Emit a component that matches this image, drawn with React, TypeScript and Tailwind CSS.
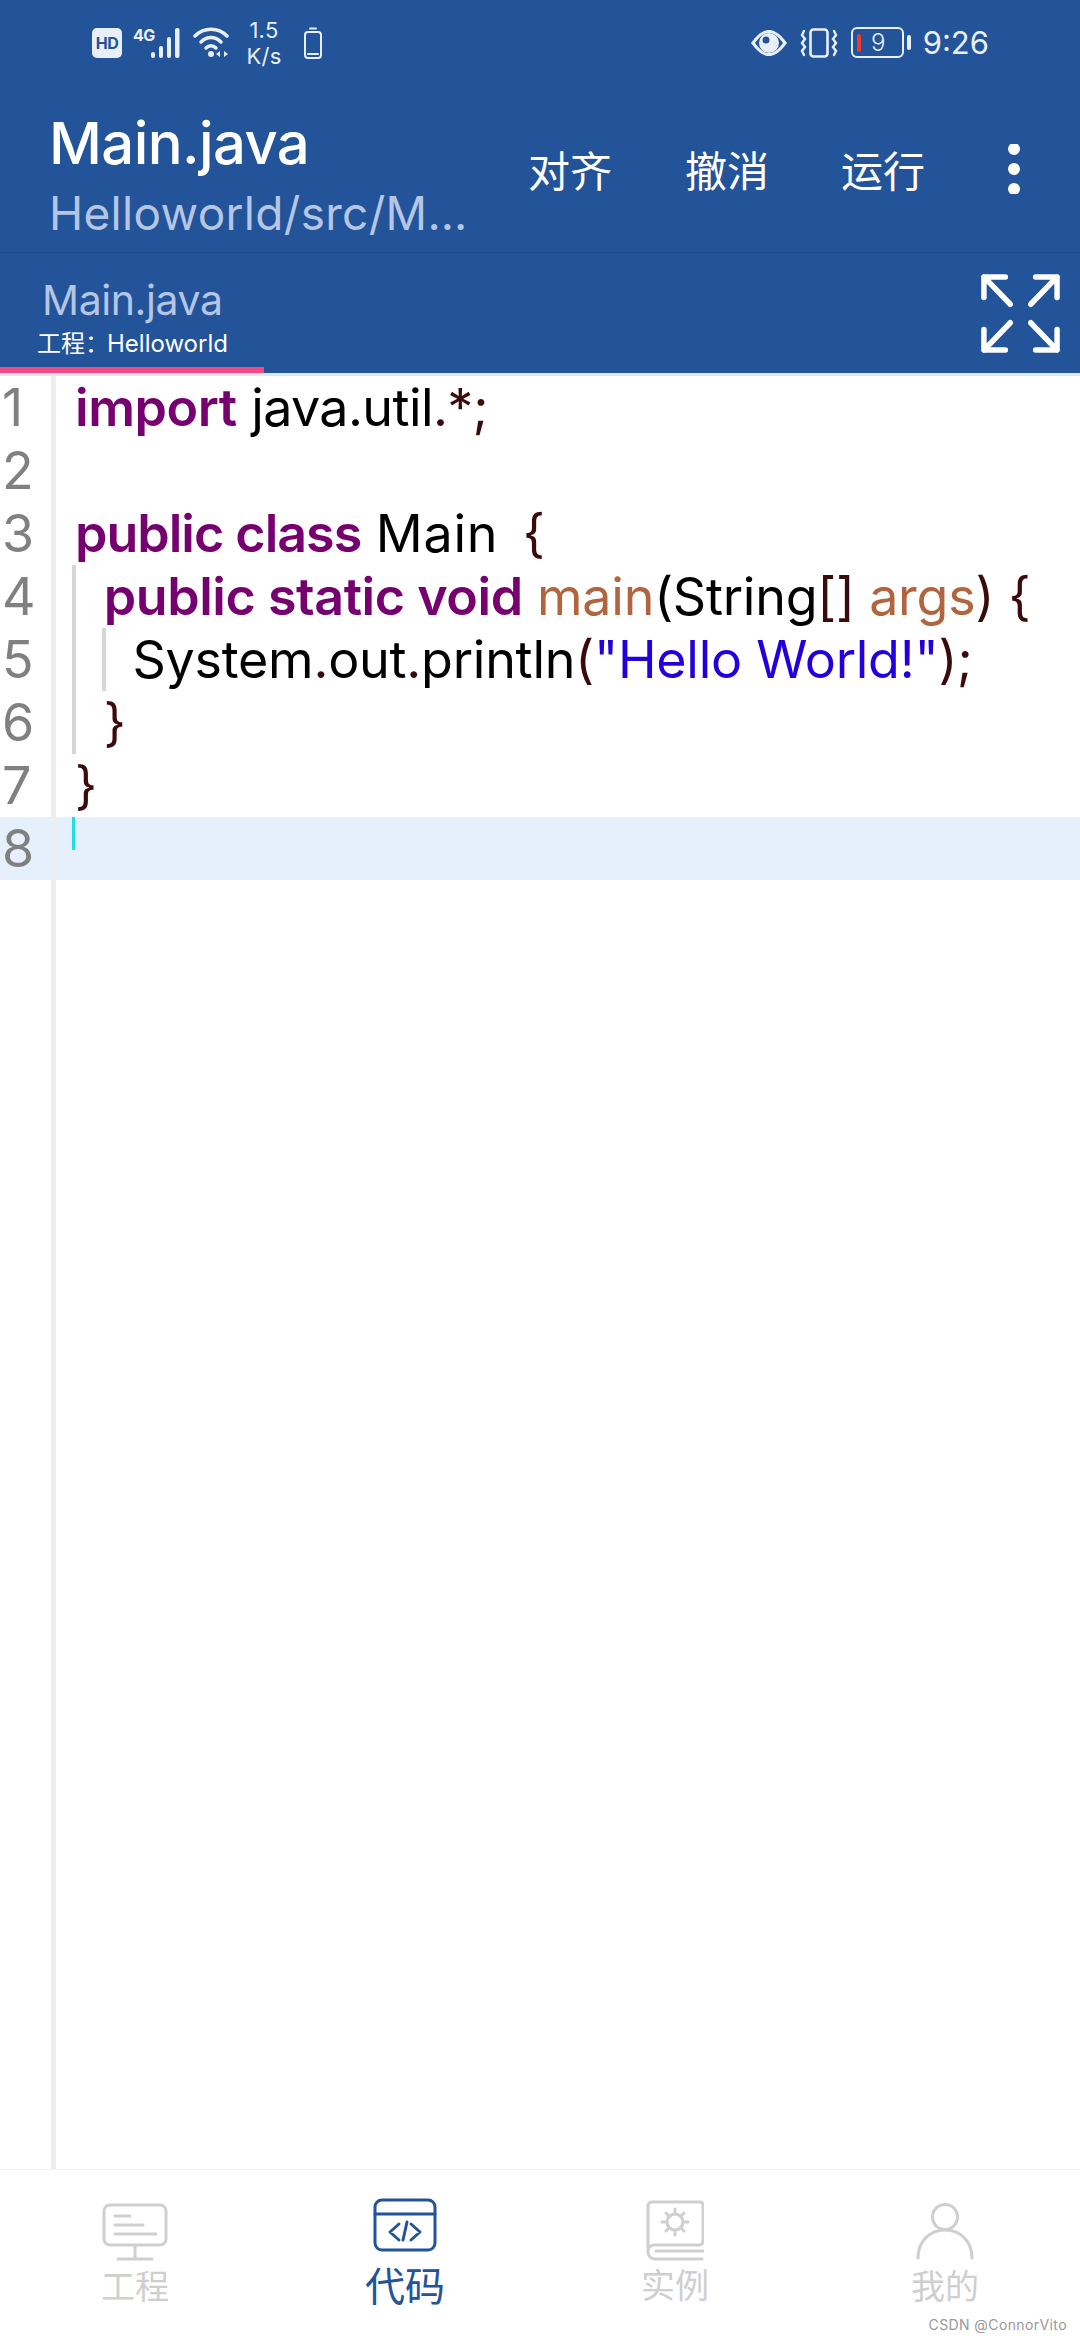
import React from "react";

const BLUE = "bg-[#235399]";
const kw = "text-[#770070] font-semibold tracking-[-0.45px]";
const pn = "text-[#3c0a0a]";
const fn = "text-[#b0653f]";

const Code = ({ n, active, children }: { n: number; active?: boolean; children?: React.ReactNode }) => (
  <div className={`flex h-[63px] items-center ${active ? "bg-[#e6f0fc]" : ""}`}>
    <div className="w-[51px] shrink-0 pl-[2px] text-[52px] leading-[63px] text-[#808080]">{n}</div>
    <div className="h-full w-[5px] shrink-0 bg-[#eeeeee]" />
    <div className="pl-[19px] text-[52px] leading-[63px] whitespace-pre text-black tracking-[-0.25px]">{children}</div>
  </div>
);

export default function App() {
  return (
    <div className="relative flex h-[2340px] w-[1080px] flex-col overflow-hidden bg-white font-['Inter','Noto_Sans_CJK_SC',sans-serif]">
      {/* header */}
      <header className={`${BLUE} h-[253px] shrink-0 border-b border-[#1f4b8c] text-white`}>
        <div className="flex h-[85px] items-center justify-between pl-[92px] pr-[91px] text-[#e9eff8]">
          <div className="flex items-center">
            <div className="flex h-[30px] w-[30px] items-center justify-center rounded-[5px] bg-[#e9eff8] text-[16px] font-bold tracking-[-0.5px] text-[#235399]">HD</div>
            <div className="relative ml-[11px] h-[32px] w-[50px]">
              <span className="absolute left-0 top-[-4px] text-[16px] font-bold tracking-[-0.5px]">4G</span>
              <svg width="50" height="32" viewBox="0 0 50 32" fill="#e9eff8">
                <rect x="18" y="25" width="4" height="6" rx="2" />
                <rect x="26" y="19" width="4" height="12" rx="2" />
                <rect x="34" y="10" width="4" height="21" rx="2" />
                <rect x="42" y="1" width="4.5" height="30" rx="2" />
              </svg>
            </div>
            <svg className="ml-[10px]" width="38" height="32" viewBox="0 0 38 32" fill="none" stroke="#e9eff8" strokeWidth="3.5" strokeLinecap="round">
              <path d="M2 9C11 0 25 0 34 9" />
              <path d="M8 15C14 9 22 9 28 15" />
              <path d="M13 21C16 18 20 18 23 21" />
              <circle cx="18" cy="27" r="3" fill="#e9eff8" stroke="none" />
              <path d="M27 24l-4 3 4 3zM31 24l4 3-4 3z" fill="#e9eff8" stroke="none" />
            </svg>
            <div className="ml-[15px] w-[36px] text-center text-[22px] leading-[26px] tracking-[0.3px]">
              <div>1.5</div>
              <div>K/s</div>
            </div>
            <svg className="ml-[21px]" width="20" height="32" viewBox="0 0 20 32" fill="none" stroke="#e9eff8" strokeWidth="2">
              <rect x="2" y="5" width="16" height="26" rx="3" />
              <path d="M7 1.5h6M5 27h10" strokeLinecap="round" />
            </svg>
          </div>
          <div className="flex items-center">
            <svg width="38" height="28" viewBox="0 0 38 28">
              <path d="M1 14C9 3 15 1 19 1s10 2 18 13c-8 11-14 13-18 13S9 25 1 14z" fill="#e9eff8" />
              <path d="M5 14C11 6 15 4 19 4s8 2 14 10c-6 8-10 10-14 10S11 22 5 14z" fill="#235399" />
              <circle cx="19" cy="14" r="10" fill="#e9eff8" />
              <circle cx="16" cy="11" r="3.5" fill="#235399" />
            </svg>
            <svg className="ml-[12px]" width="38" height="30" viewBox="0 0 38 30" fill="none" stroke="#e9eff8" strokeWidth="2.6" strokeLinecap="round">
              <rect x="10.5" y="1.5" width="17" height="27" rx="3" />
              <path d="M4 3L2 7l3 4-3 4 3 4-3 4 2 4M34 3l2 4-3 4 3 4-3 4 3 4-2 4" strokeWidth="2.4" />
            </svg>
            <div className="relative ml-[13px] flex h-[31px] w-[53px] items-center justify-center rounded-[6px] border-2 border-[#e9eff8] pl-[2px] text-[24px] font-light leading-none">
              <span className="absolute left-[4px] top-[5px] h-[18px] w-[4px] rounded-[2px] bg-[#f0392b]" />
              9
            </div>
            <div className="ml-[3px] h-[15px] w-[4px] rounded-[2px] bg-[#e9eff8]" />
            <div className="ml-[12px] text-[31px] leading-none">9:26</div>
          </div>
        </div>
        <div className="flex h-[167px] items-start justify-between pl-[49px] pr-[59px]">
          <div className="w-[420px]">
            <div className="pt-[23px] text-[58px] font-medium leading-[70px] tracking-[-0.6px]">Main.java</div>
            <div className="mt-[7px] truncate text-[46px] leading-[56px] tracking-[0.3px] text-[#b4c6e4]">Helloworld/src/M…</div>
          </div>
          <div className="flex items-center pt-[62px] text-[42px] font-normal leading-[50px]">
            <span className="w-[157px]">对齐</span>
            <span className="w-[156px]">撤消</span>
            <span className="w-[166px]">运行</span>
            <svg className="-mt-[6px]" width="14" height="50" viewBox="0 0 14 50" fill="#fff">
              <circle cx="7" cy="5" r="6" />
              <circle cx="7" cy="25" r="6" />
              <circle cx="7" cy="45" r="6" />
            </svg>
          </div>
        </div>
      </header>

      {/* tab strip */}
      <div className={`${BLUE} relative flex h-[120px] shrink-0 items-start justify-between`}>
        <div className="relative h-[120px] w-[264px]">
          <div className="pl-[42px] pt-[22px] text-[41px] leading-[50px] text-[#b4c6e4] tracking-[-0.4px]">Main.java</div>
          <div className="pl-[37px] pt-[4px] text-[24px] leading-[30px] text-white">工程：<span className="ml-[-2px]">Helloworld</span></div>
          <div className="absolute bottom-0 left-0 h-[6px] w-full bg-[#f24a85]" />
        </div>
        <svg className="mr-[20px] mt-[21px]" width="79" height="79" viewBox="0 0 81 81" fill="none" stroke="#fff" strokeWidth="5.6" strokeLinecap="round" strokeLinejoin="round">
          <path d="M3 24V3h22M3 3l27 28" />
          <path d="M78 24V3H56M78 3L51 31" />
          <path d="M3 57v21h22M3 78l27-28" />
          <path d="M78 57v21H56M78 78L51 50" />
        </svg>
      </div>
      <div className="h-[3px] shrink-0 bg-[#dfe6ef]" />

      {/* editor */}
      <main className="relative flex flex-1 flex-col">
        <Code n={1}><span className={kw}>import</span> <span className="tracking-[-0.6px]">java.util<span className={pn}>.*;</span></span></Code>
        <Code n={2} />
        <Code n={3}><span className="font-semibold tracking-[-1px] text-[#770070]">public class</span> <span className="tracking-[0.8px]">Main</span> <span className={`${pn} ml-[10px]`}>{"{"}</span></Code>
        <Code n={4}>{"  "}<span className={kw}>public static void</span> <span className={fn}>main</span>(String<span className={pn}>[]</span> <span className={fn}>args</span><span className={pn}>{") {"}</span></Code>
        <Code n={5}>{"    "}System<span className={pn}>.</span>out<span className={pn}>.</span>println<span className={pn}>(</span><span className="text-[#2200dd]">"Hello World!"</span><span className={pn}>);</span></Code>
        <Code n={6}>{"  "}<span className={pn}>{"}"}</span></Code>
        <Code n={7}><span className={pn}>{"}"}</span></Code>
        <Code n={8} active />
        <div className="flex flex-1">
          <div className="w-[51px]" />
          <div className="w-[5px] bg-[#eeeeee]" />
        </div>
        <div className="absolute left-[72px] top-[189px] h-[189px] w-[4px] bg-[#d6d6d6]" />
        <div className="absolute left-[102px] top-[252px] h-[63px] w-[4px] bg-[#d6d6d6]" />
        <div className="absolute left-[72px] top-[441px] h-[33px] w-[3px] bg-[#22dde6]" />
      </main>

      {/* bottom nav */}
      <nav className="grid h-[171px] shrink-0 grid-cols-4 border-t border-[#f3f3f3] bg-white text-[#cfcfcf]">
        <div className="flex flex-col items-center pt-[33px] text-[34px] leading-[40px]">
          <svg width="66" height="58" viewBox="0 0 66 58" fill="none" stroke="#cfcfcf" strokeWidth="3" strokeLinecap="round">
            <rect x="2" y="2" width="62" height="40" rx="6" />
            <path d="M13 13h15M13 22h28M13 31h41M33 43v13M16 56h34" />
          </svg>
          <span className="mt-[6px]">工程</span>
        </div>
        <div className="flex flex-col items-center pt-[28px] text-[40px] leading-[50px] text-[#235399]">
          <svg width="64" height="54" viewBox="0 0 64 54" fill="none" stroke="#235399" strokeWidth="3" strokeLinecap="round" strokeLinejoin="round">
            <rect x="2" y="2" width="60" height="50" rx="7" />
            <path d="M2 16h60" />
            <path d="M17 34l9-8M17 34l9 8M47 34l-9-8M47 34l-9 8M34 24l-4 18" strokeWidth="3" />
          </svg>
          <span className="mt-[10px]">代码</span>
        </div>
        <div className="flex flex-col items-center pt-[30px] text-[34px] leading-[40px]">
          <svg width="58" height="62" viewBox="0 0 58 62" fill="none" stroke="#cfcfcf" strokeWidth="3" strokeLinecap="round" strokeLinejoin="round">
            <path d="M2 50V6a4 4 0 0 1 4-4h48a3 3 0 0 1 3 3v36a4 4 0 0 1-4 4H8a6 6 0 0 0-6 7 7 7 0 0 0 7 7h47M10 51h47" />
            <circle cx="29" cy="22" r="8" />
            <path d="M29 9v3M29 32v3M16 22h3M39 22h3M20 13l2 2M36 29l2 2M38 13l-2 2M22 29l-2 2" />
          </svg>
          <span className="mt-[4px]">实例</span>
        </div>
        <div className="flex flex-col items-center pt-[33px] text-[34px] leading-[40px]">
          <svg width="58" height="58" viewBox="0 0 58 58" fill="none" stroke="#cfcfcf" strokeWidth="3" strokeLinecap="round">
            <circle cx="29" cy="14" r="12.5" />
            <path d="M2 55C2 38 14 27 29 27s27 11 27 28" />
          </svg>
          <span className="mt-[6px]">我的</span>
        </div>
      </nav>
      <div className="absolute bottom-[8px] right-[13px] text-[14px] leading-none tracking-[0.4px] text-[#999999]">CSDN @ConnorVito</div>
    </div>
  );
}
